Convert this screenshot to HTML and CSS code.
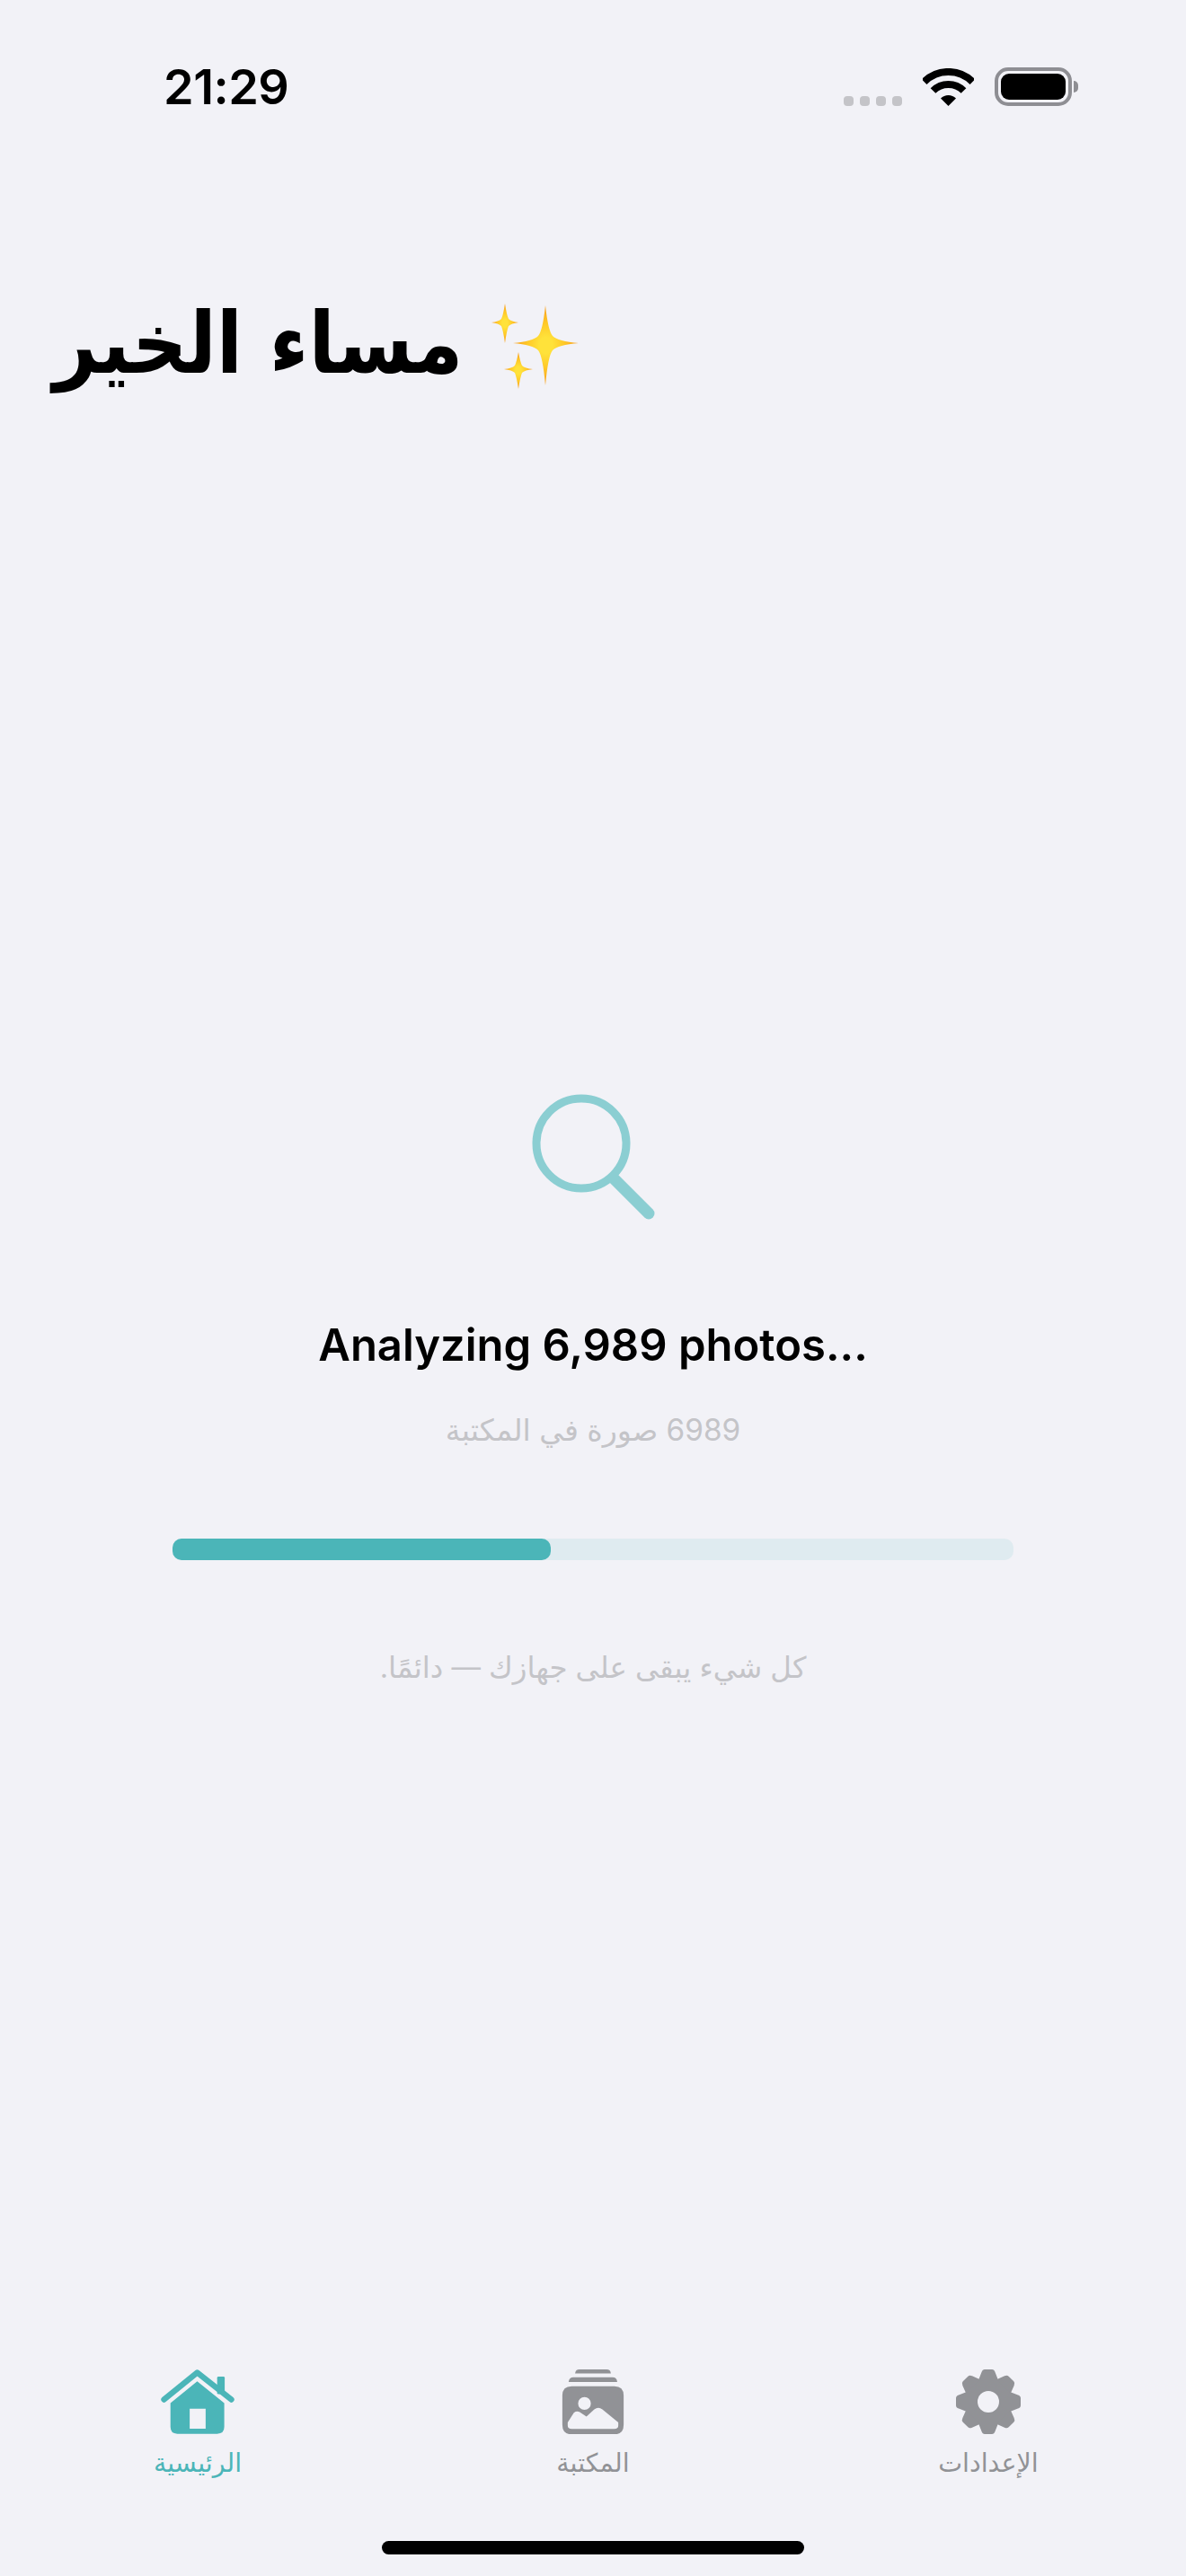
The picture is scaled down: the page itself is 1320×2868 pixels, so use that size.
FILE: index.html
```html
<!DOCTYPE html>
<html lang="ar">
<head>
<meta charset="UTF-8">
<title>Home</title>
<link rel="stylesheet" href="styles.css">
</head>
<body>
<div class="screen">
  <div class="status">
    <span class="time">21:29</span>
    <div class="status-icons">
      <div class="dots"><i></i><i></i><i></i><i></i></div>
      <svg class="wifi" width="57" height="42" viewBox="0 0 57 42">
        <path d="M1.6 15.1A38 38 0 0 1 55.4 15.1" fill="none" stroke="#000" stroke-width="8"/>
        <path d="M11.5 25A24 24 0 0 1 45.5 25" fill="none" stroke="#000" stroke-width="8"/>
        <path d="M28.5 42L20 33.5A12 12 0 0 1 37 33.5Z"/>
      </svg>
      <div class="battery"><div class="battery-fill"></div></div>
    </div>
  </div>

  <div class="greeting">
    <h1 dir="rtl">مساء الخير</h1>
    <svg class="sparkles" width="97" height="95" viewBox="0 0 97 95">
      <defs>
        <radialGradient id="spark">
          <stop offset="0.2" stop-color="#ffe23a"/>
          <stop offset="0.55" stop-color="#ffc928"/>
          <stop offset="1" stop-color="#f79a1a"/>
        </radialGradient>
      </defs>
      <path fill="url(#spark)" d="M60 2Q63 30 68 36Q74 42 97 44Q74 46 68 52Q63 58 60 91Q57 58 52 52Q46 46 24 44Q46 42 52 36Q57 30 60 2Z"/>
      <path fill="url(#spark)" d="M15 0Q17 13 19 17Q22 20 30 21Q22 22 19 25Q17 30 15 44Q13 30 11 25Q8 22 0 21Q8 20 11 17Q13 13 15 0Z"/>
      <path fill="url(#spark)" d="M30 54Q32 65 34 69Q37 72 46 73Q37 74 34 77Q32 82 30 95Q28 82 26 77Q23 74 14 73Q23 72 26 69Q28 65 30 54Z"/>
    </svg>
  </div>

  <main class="progress-area">
    <svg class="search" width="140" height="144" viewBox="0 0 140 144">
      <circle cx="55" cy="55" r="50" fill="none" stroke="#8bced2" stroke-width="9"/>
      <path d="M91 94L130 133" stroke="#8bced2" stroke-width="13" stroke-linecap="round"/>
    </svg>
    <p class="analyzing">Analyzing 6,989 photos...</p>
    <p class="count" dir="rtl">6989 صورة في المكتبة</p>
    <div class="track"><div class="track-fill" style="width: 45%"></div></div>
    <p class="note" dir="rtl">كل شيء يبقى على جهازك — دائمًا.</p>
  </main>

  <nav class="tabs">
    <div class="tab active">
      <svg width="82" height="73" viewBox="0 0 82 73">
        <rect x="63" y="8" width="8.500" height="20" rx="1.500"/>
        <path d="M3 34L40.500 3.500L79 34" fill="none" stroke="#4bb5b8" stroke-width="6.500" stroke-linecap="round" stroke-linejoin="round"/>
        <path fill-rule="evenodd" d="M40.500 13.500L71 38V65Q71 72.700 63 72.700H18Q10.300 72.700 10.300 65V38ZM32 44.300V67H50V44.300Z"/>
      </svg>
      <span dir="rtl">الرئيسية</span>
    </div>
    <div class="tab">
      <svg width="72" height="76" viewBox="0 0 72 76">
        <path d="M15 4.700Q15.500 0 20 0H52Q56.500 0 57 4.700Z"/>
        <path d="M7.300 14.700Q8 9.300 13 9.300H59Q64 9.300 64.500 14.700Z"/>
        <path fill-rule="evenodd" d="M11 19.700H61Q72 19.700 72 30.700V65.300Q72 76.300 61 76.300H11Q0 76.300 0 65.300V30.700Q0 19.700 11 19.700ZM18.500 40A7.500 7.500 0 1 0 33.500 40A7.500 7.500 0 1 0 18.500 40ZM6.300 62.300V66Q6.300 70 11 70H61Q65.700 70 65.700 66V62.300L47 47Q42.300 43.500 37.500 47L28.300 55.500L20 50Q16.700 48.500 13.500 51Z"/>
      </svg>
      <span dir="rtl">المكتبة</span>
    </div>
    <div class="tab">
      <svg width="72" height="72" viewBox="0 0 72 72">
        <circle cx="36" cy="36" r="27"/>
        <g id="teeth">
          <path id="tooth" d="M25 12L28.500 3Q29.500 0 32 0H40Q42.500 0 43.500 3L47 12Z"/>
          <use href="#tooth" transform="rotate(45 36 36)"/>
          <use href="#tooth" transform="rotate(90 36 36)"/>
          <use href="#tooth" transform="rotate(135 36 36)"/>
          <use href="#tooth" transform="rotate(180 36 36)"/>
          <use href="#tooth" transform="rotate(225 36 36)"/>
          <use href="#tooth" transform="rotate(270 36 36)"/>
          <use href="#tooth" transform="rotate(315 36 36)"/>
        </g>
        <circle cx="36" cy="36" r="12" fill="#f2f2f7"/>
      </svg>
      <span dir="rtl">الإعدادات</span>
    </div>
  </nav>

  <div class="home-bar"><div class="home-indicator"></div></div>
</div>
</body>
</html>
```

FILE: styles.css
```css
body {
  margin: 0;
  background-color: #f2f2f7;
  font-family: "Inter", "DejaVu Sans", sans-serif;
  color: #000;
}
p {
  margin: 0;
}
.screen {
  display: flex;
  flex-direction: column;
  height: 2868px;
  overflow: hidden;
}

/* status bar */
.status {
  display: flex;
  justify-content: space-between;
  align-items: flex-start;
  height: 118px;
  padding: 0 127px 0 182px;
  box-sizing: border-box;
  flex: none;
}
.time {
  margin-top: 64px;
  font-size: 54px;
  line-height: 66px;
  font-weight: 600;
  letter-spacing: -0.5px;
}
.status-icons {
  display: flex;
  align-items: flex-end;
  margin-top: 75px;
}
.dots {
  display: flex;
  gap: 7px;
  margin-right: 23px;
}
.dots i {
  width: 11px;
  height: 11px;
  border-radius: 4px;
  background-color: #c4c4c8;
}
.wifi {
  margin-right: 23px;
}
.battery {
  position: relative;
  width: 86px;
  height: 43px;
  padding: 3px;
  box-sizing: border-box;
  border: 4px solid #8e8e93;
  border-radius: 15px;
}
.battery:after {
  content: "";
  position: absolute;
  right: -11px;
  top: 11px;
  width: 5px;
  height: 13px;
  border-radius: 0 6px 6px 0;
  background-color: #8e8e93;
}
.battery-fill {
  height: 100%;
  border-radius: 9px;
  background-color: #000;
}

/* greeting */
.greeting {
  display: flex;
  align-items: flex-start;
  gap: 32px;
  padding: 220px 0 0 59px;
  flex: none;
}
.greeting h1 {
  margin: 0;
  font-family: "DejaVu Sans Condensed", "DejaVu Sans", sans-serif;
  font-size: 95px;
  line-height: 88px;
  font-weight: 700;
}

/* progress */
.progress-area {
  flex: 1;
  display: flex;
  flex-direction: column;
  align-items: center;
  padding-top: 785px;
}
.search {
  margin-left: 4px;
}
.analyzing {
  margin-top: 106px;
  font-size: 49px;
  line-height: 60px;
  font-weight: 600;
}
.count {
  margin-top: 42px;
  font-size: 33.3px;
  line-height: 44px;
  color: #c4c4c8;
}
.track {
  width: 936px;
  height: 24px;
  margin-top: 99px;
  border-radius: 10px;
  background-color: #dfebf0;
}
.track-fill {
  height: 100%;
  border-radius: 10px;
  background-color: #4bb5b8;
}
.note {
  margin-top: 98px;
  font-size: 32.5px;
  line-height: 44px;
  color: #c4c4c8;
}

/* bottom tabs */
.tabs {
  display: grid;
  grid-template-columns: repeat(3, 1fr);
  height: 122px;
  flex: none;
}
.tab {
  display: flex;
  flex-direction: column;
  align-items: center;
  justify-content: flex-end;
  height: 122px;
  fill: #919296;
  color: #919296;
  font-size: 28.5px;
  line-height: 36px;
}
.tab.active {
  fill: #4bb5b8;
  color: #4bb5b8;
}
.tab span {
  margin-top: 14px;
}
.home-bar {
  display: flex;
  justify-content: center;
  height: 108px;
  padding-top: 69px;
  box-sizing: border-box;
  flex: none;
}
.home-indicator {
  width: 470px;
  height: 15px;
  border-radius: 8px;
  background-color: #000;
}
```
